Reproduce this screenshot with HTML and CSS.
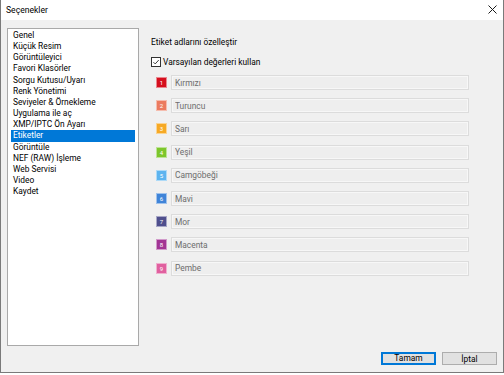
FILE: index.html
```html
<!DOCTYPE html>
<html lang="tr">
<head>
  <meta charset="UTF-8" />
  <title>Seçenekler</title>
  <link rel="stylesheet" href="styles.css">
</head>
<body>
  <div class="window">
    <div class="titlebar">
      <span class="title">Seçenekler</span>
      <svg class="close" width="9" height="9" viewBox="0 0 9 9">
        <path d="M0.5 0.5 L8.5 8.5 M8.5 0.5 L0.5 8.5" stroke="#1a1a1a" stroke-width="1" fill="none"/>
      </svg>
    </div>

    <div class="content">
      <div class="main">
        <ul class="nav">
          <li>Genel</li>
          <li>Küçük Resim</li>
          <li>Görüntüleyici</li>
          <li>Favori Klasörler</li>
          <li>Sorgu Kutusu/Uyarı</li>
          <li>Renk Yönetimi</li>
          <li>Seviyeler &amp; Örnekleme</li>
          <li>Uygulama ile aç</li>
          <li>XMP/IPTC Ön Ayarı</li>
          <li class="selected">Etiketler</li>
          <li>Görüntüle</li>
          <li>NEF (RAW) İşleme</li>
          <li>Web Servisi</li>
          <li>Video</li>
          <li>Kaydet</li>
        </ul>

        <section class="panel">
          <div class="panel-title">Etiket adlarını özelleştir</div>
          <label class="check">
            <span class="box">
              <svg width="10" height="10" viewBox="0 0 10 10">
                <path d="M1.8 5.2 L4 7.4 L8.4 2.6" stroke="#222" stroke-width="1.1" fill="none"/>
              </svg>
            </span>
            Varsayılan değerleri kullan
          </label>

          <div class="labels">
            <div class="label-row"><span class="swatch c1">1</span><input class="name" value="Kırmızı" disabled></div>
            <div class="label-row"><span class="swatch c2">2</span><input class="name" value="Turuncu" disabled></div>
            <div class="label-row"><span class="swatch c3">3</span><input class="name" value="Sarı" disabled></div>
            <div class="label-row"><span class="swatch c4">4</span><input class="name" value="Yeşil" disabled></div>
            <div class="label-row"><span class="swatch c5">5</span><input class="name" value="Camgöbeği" disabled></div>
            <div class="label-row"><span class="swatch c6">6</span><input class="name" value="Mavi" disabled></div>
            <div class="label-row"><span class="swatch c7">7</span><input class="name" value="Mor" disabled></div>
            <div class="label-row"><span class="swatch c8">8</span><input class="name" value="Macenta" disabled></div>
            <div class="label-row"><span class="swatch c9">9</span><input class="name" value="Pembe" disabled></div>
          </div>
        </section>
      </div>

      <div class="buttons">
        <button class="btn default">Tamam</button>
        <button class="btn">İptal</button>
      </div>
    </div>
  </div>
</body>
</html>
```

FILE: styles.css
```css
* {
  box-sizing: border-box;
  margin: 0;
  padding: 0;
}

body {
  font-family: Roboto, 'Noto Sans', sans-serif;
  font-size: 8.4px;
  color: #000;
  background: #fff;
  width: 504px;
  height: 375px;
  overflow: hidden;
}

.window {
  width: 504px;
  height: 373px;
  border: 1px solid #7a7a7a;
  border-top: none;
  display: flex;
  flex-direction: column;
}

.titlebar {
  height: 20px;
  background: #fff;
  display: flex;
  align-items: center;
  justify-content: space-between;
  padding: 0 6px 0 5px;
}

.title {
  font-size: 8.6px;
}

.close {
  display: block;
  margin-top: -1px;
}

.content {
  flex: 1;
  background: #f0f0f0;
  display: flex;
  flex-direction: column;
  padding: 8px 6px 6px 6px;
}

.main {
  display: flex;
  gap: 12px;
}

.nav {
  list-style: none;
  width: 132px;
  height: 318px;
  background: #fff;
  border: 1px solid #a9a9a9;
  padding: 1px 3px;
}

.nav li {
  height: 11.17px;
  line-height: 11.17px;
  padding-left: 2px;
  white-space: nowrap;
}

.nav li.selected {
  background: #0078d7;
  color: #fff;
}

.panel {
  flex: 1;
  padding-top: 9px;
}

.panel-title {
  height: 11px;
  line-height: 11px;
}

.check {
  display: flex;
  align-items: center;
  gap: 2px;
  margin-top: 8px;
  height: 12px;
}

.box {
  width: 10px;
  height: 10px;
  border: 1px solid #333;
  background: #fff;
  display: flex;
  align-items: center;
  justify-content: center;
}

.box svg {
  display: block;
}

.labels {
  margin-top: 3px;
  padding-left: 5px;
}

.label-row {
  height: 23.2px;
  display: flex;
  align-items: center;
  gap: 4px;
}

.swatch {
  width: 11px;
  height: 11px;
  color: #fff;
  font-size: 6px;
  line-height: 9px;
  text-align: center;
  border: 1px solid rgba(255, 255, 255, 0.5);
}

.c1 { background: #d50f1e; }
.c2 { background: #eb7b5f; }
.c3 { background: #f6a925; }
.c4 { background: #7dc62c; }
.c5 { background: #5db4ef; }
.c6 { background: #3f84d8; }
.c7 { background: #4f4f8d; }
.c8 { background: #a23594; }
.c9 { background: #e0609f; }

.name {
  width: 298px;
  height: 15px;
  border: 1px solid #dcdcdc;
  box-shadow: inset 0 0 0 1px #f7f7f7;
  background: #eeeeee;
  font-family: inherit;
  font-size: 8.4px;
  color: #6d6d6d;
  padding-left: 3px;
  outline: none;
}

.buttons {
  margin-top: auto;
  display: flex;
  justify-content: flex-end;
  gap: 6px;
  padding-bottom: 1px;
}

.btn {
  width: 55px;
  height: 13px;
  background: #e1e1e1;
  border: 1px solid #adadad;
  font-family: inherit;
  font-size: 8.4px;
  line-height: 10px;
  color: #000;
}

.btn.default {
  border: 2px solid #0078d7;
  line-height: 9px;
}
```
